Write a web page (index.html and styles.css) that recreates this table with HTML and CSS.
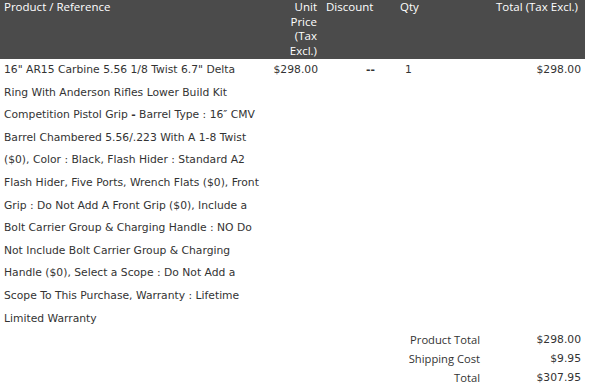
FILE: index.html
```html
<!DOCTYPE html>
<html>
<head>
<meta charset="utf-8">
<link rel="stylesheet" href="styles.css">
</head>
<body>
<table class="order">
  <colgroup>
    <col class="c-prod">
    <col class="c-unit">
    <col class="c-disc">
    <col class="c-qty">
    <col class="c-total">
  </colgroup>
  <thead>
    <tr class="head">
      <th class="h-left">Product / Reference</th>
      <th class="h-right h-unit">Unit Price (Tax Excl.)</th>
      <th class="h-left">Discount</th>
      <th class="h-left">Qty</th>
      <th class="h-right h-total">Total (Tax Excl.)</th>
    </tr>
  </thead>
  <tbody>
    <tr class="item">
      <td class="prod">16" AR15 Carbine 5.56 1/8 Twist 6.7" Delta Ring With Anderson Rifles Lower Build Kit Competition Pistol Grip <b class="dash">-</b> Barrel Type : 16″ CMV Barrel Chambered 5.56/.223 With A 1-8 Twist ($0), Color : Black, Flash Hider : Standard A2 Flash Hider, Five Ports, Wrench Flats ($0), Front Grip : Do Not Add A Front Grip ($0), Include a Bolt Carrier Group &amp; Charging Handle : NO Do Not Include Bolt Carrier Group &amp; Charging Handle ($0), Select a Scope : Do Not Add a Scope To This Purchase, Warranty : Lifetime Limited Warranty</td>
      <td class="num">$298.00</td>
      <td class="disc">--</td>
      <td class="qty">1</td>
      <td class="num">$298.00</td>
    </tr>
    <tr class="sum">
      <td colspan="4" class="label">Product Total</td>
      <td class="num">$298.00</td>
    </tr>
    <tr class="sum">
      <td colspan="4" class="label">Shipping Cost</td>
      <td class="num">$9.95</td>
    </tr>
    <tr class="sum">
      <td colspan="4" class="label">Total</td>
      <td class="num">$307.95</td>
    </tr>
  </tbody>
</table>
</body>
</html>
```
FILE: styles.css
```css
html, body {
  margin: 0;
  padding: 0;
  background: #ffffff;
}
.order {
  width: 585px;
  border-collapse: collapse;
  table-layout: fixed;
  font-family: "DejaVu Sans", sans-serif;
  font-size: 10.75px;
  color: #333333;
}
.c-prod { width: 265px; }
.c-unit { width: 57px; }
.c-disc { width: 74px; }
.c-qty { width: 88px; }
.c-total { width: 101px; }

.head {
  background: #4b4b4b;
  color: #ffffff;
  font-family: "Open Sans", sans-serif;
  font-size: 11.5px;
  line-height: 14.6px;
}
.head th {
  font-weight: normal;
  vertical-align: top;
  padding: 0 4px;
  height: 59px;
  box-sizing: border-box;
}
.h-left { text-align: left; }
.h-right { text-align: right; }
.head .h-unit { padding-right: 5px; }
.head .h-total { white-space: nowrap; padding-right: 7px; }

.item td {
  vertical-align: top;
  line-height: 22.6px;
  padding: 0 4px;
}
.dash { font-weight: bold; }
.num { text-align: right; }
.disc { text-align: right; padding-right: 21px !important; font-weight: bold; }
.qty { text-align: left; padding-left: 9px !important; }

.sum td {
  line-height: 19px;
  padding: 0 4px;
}
.label {
  text-align: right;
  font-family: "Open Sans", sans-serif;
  font-size: 11.2px;
  color: #333333;
}
```
